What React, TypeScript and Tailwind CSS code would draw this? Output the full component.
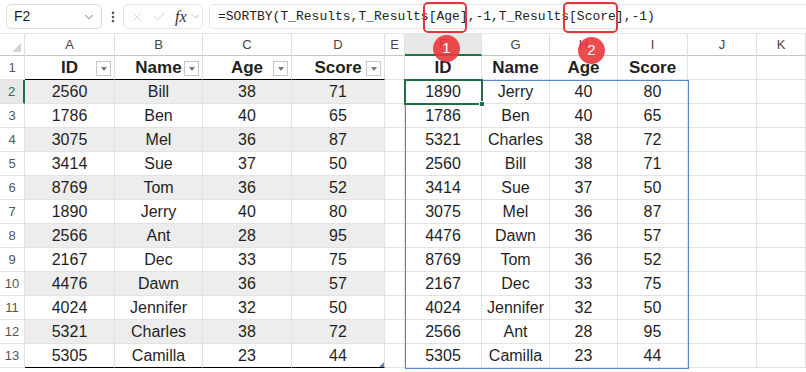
import { ChevronDown, EllipsisVertical, X, Check } from "lucide-react";

const colW = [
  "w-[25px]",
  "w-[90px]",
  "w-[88px]",
  "w-[89px]",
  "w-[93px]",
  "w-[20px]",
  "w-[77px]",
  "w-[68px]",
  "w-[68px]",
  "w-[70px]",
  "w-[69px]",
  "w-[49px]",
];
const letters = ["A", "B", "C", "D", "E", "F", "G", "H", "I", "J", "K"];

const source = [
  ["2560", "Bill", "38", "71"],
  ["1786", "Ben", "40", "65"],
  ["3075", "Mel", "36", "87"],
  ["3414", "Sue", "37", "50"],
  ["8769", "Tom", "36", "52"],
  ["1890", "Jerry", "40", "80"],
  ["2566", "Ant", "28", "95"],
  ["2167", "Dec", "33", "75"],
  ["4476", "Dawn", "36", "57"],
  ["4024", "Jennifer", "32", "50"],
  ["5321", "Charles", "38", "72"],
  ["5305", "Camilla", "23", "44"],
];

const sorted = [
  ["1890", "Jerry", "40", "80"],
  ["1786", "Ben", "40", "65"],
  ["5321", "Charles", "38", "72"],
  ["2560", "Bill", "38", "71"],
  ["3414", "Sue", "37", "50"],
  ["3075", "Mel", "36", "87"],
  ["4476", "Dawn", "36", "57"],
  ["8769", "Tom", "36", "52"],
  ["2167", "Dec", "33", "75"],
  ["4024", "Jennifer", "32", "50"],
  ["2566", "Ant", "28", "95"],
  ["5305", "Camilla", "23", "44"],
];

const headers = ["ID", "Name", "Age", "Score"];

const FilterBtn = () => (
  <span className="absolute right-[3px] top-[5px] w-[15px] h-[15px] border border-[#c9c9c9] bg-white flex items-center justify-center">
    <span className="w-0 h-0 border-l-[3px] border-r-[3px] border-t-[4px] border-l-transparent border-r-transparent border-t-[#777]" />
  </span>
);

const Badge = ({ n, className }: { n: string; className: string }) => (
  <div
    className={
      "absolute w-[27px] h-[27px] rounded-full bg-[#e8383d]/90 text-white text-[15px] flex items-center justify-center " +
      className
    }
  >
    {n}
  </div>
);

export default function App() {
  // rows 1..13 of the sheet
  const rows = Array.from({ length: 13 }, (_, i) => i + 1);

  const cellText = (r: number, c: number): string => {
    if (r === 1) {
      if (c >= 1 && c <= 4) return headers[c - 1];
      if (c >= 6 && c <= 9) return headers[c - 6];
      return "";
    }
    if (c >= 1 && c <= 4) return source[r - 2][c - 1];
    if (c >= 6 && c <= 9) return sorted[r - 2][c - 6];
    return "";
  };

  return (
    <div className="w-[806px] h-[372px] overflow-hidden bg-white relative font-['Liberation_Sans',sans-serif] text-[#1f1f1f]">
      {/* Formula bar */}
      <div className="h-[33px] flex items-center pl-[6px] bg-white">
        <div className="w-[96px] h-[25px] border border-[#dedede] rounded-[5px] flex items-center justify-between pl-[7px] pr-[5px]">
          <span className="text-[14px]">F2</span>
          <ChevronDown size={14} strokeWidth={1.5} className="text-[#666]" />
        </div>
        <div className="w-[21px] flex justify-center">
          <EllipsisVertical size={14} strokeWidth={2.5} className="text-[#555]" />
        </div>
        <div className="w-[80px] h-[25px] border border-[#e3e3e3] rounded-[5px] flex items-center pl-[6px]">
          <X size={14} strokeWidth={1.2} className="text-[#c8c8c8]" />
          <Check size={15} strokeWidth={1.2} className="text-[#c8c8c8] ml-[8px]" />
          <span className="ml-[8px] text-[16px] italic font-['Liberation_Serif',serif] text-[#333]">fx</span>
          <ChevronDown size={11} strokeWidth={1.5} className="text-[#999] ml-[3px]" />
        </div>
        <div className="ml-[6px] flex-1 h-[25px] border border-r-0 border-[#e3e3e3] rounded-l-[5px] flex items-center pl-[8px]">
          <span className="text-[13px] font-['Liberation_Mono',monospace] text-[#222] whitespace-pre">
            =SORTBY(T_Results,T_Results[Age],-1,T_Results[Score],-1)
          </span>
        </div>
      </div>

      {/* Column headers */}
      <div className="flex h-[23px] border-t border-[#e6e6e6]">
        {colW.map((w, c) => (
          <div
            key={c}
            className={
              w +
              " h-full flex items-center justify-center text-[13px] text-[#444] border-r border-[#e1e1e1] relative " +
              (c === 6 ? "bg-[#e8e8e8] border-b-2 border-b-[#1e7145]" : "border-b border-b-[#c6c6c6]")
            }
          >
            {c === 0 ? (
              <span className="absolute right-[3px] bottom-[3px] w-0 h-0 [border-bottom:9px_solid_#d4d4d4] [border-left:9px_solid_transparent]" />
            ) : (
              letters[c - 1]
            )}
          </div>
        ))}
      </div>

      {/* Sheet rows */}
      {rows.map((r) => (
        <div key={r} className="flex h-[24px]">
          {colW.map((w, c) => {
            const inTable1 = c >= 1 && c <= 4;
            const band = inTable1 && r >= 2 && r % 2 === 0;
            const header = r === 1;
            let cls = w + " h-full relative flex items-center justify-center ";
            if (c === 0) {
              cls +=
                "text-[13px] border-r border-b border-[#e1e1e1] " +
                (r === 2 ? "text-[#1e7145] border-r-2 border-r-[#1e7145] bg-[#e8e8e8]" : "text-[#555]");
            } else {
              cls += header ? "text-[17px] font-bold " : "text-[16px] ";
              cls += band ? "bg-[#ededed] " : "";
              if (inTable1 && (r === 1 || r === 13)) {
                cls += "border-b-[1.5px] border-b-black border-r border-r-[#e1e1e1]";
              } else {
                cls += "border-r border-b border-[#e3e3e3]";
              }
            }
            return (
              <div key={c} className={cls}>
                {c === 0 ? r : cellText(r, c)}
                {header && inTable1 && <FilterBtn />}
              </div>
            );
          })}
        </div>
      ))}

      {/* Spill range border */}
      <div className="absolute left-[405px] top-[80px] w-[284px] h-[289px] border border-[#5b87c9] pointer-events-none" />
      {/* Active cell F2 */}
      <div className="absolute left-[404px] top-[79px] w-[79px] h-[26px] border-2 border-[#1e7145] pointer-events-none">
        <span className="absolute -right-[4px] -bottom-[4px] w-[6px] h-[6px] bg-[#1e7145] border border-white" />
      </div>
      {/* Table resize handle */}
      <span className="absolute left-[379px] top-[362px] w-0 h-0 [border-bottom:5px_solid_#5b87c9] [border-left:5px_solid_transparent]" />

      {/* Callouts */}
      <div className="absolute left-[423px] top-[2px] w-[44px] h-[31px] border-2 border-[#e0383e] rounded-[5px]" />
      <div className="absolute left-[563px] top-[2px] w-[55px] h-[31px] border-2 border-[#e0383e] rounded-[5px]" />
      <Badge n="1" className="left-[433px] top-[35px]" />
      <Badge n="2" className="left-[578px] top-[37px]" />
    </div>
  );
}
